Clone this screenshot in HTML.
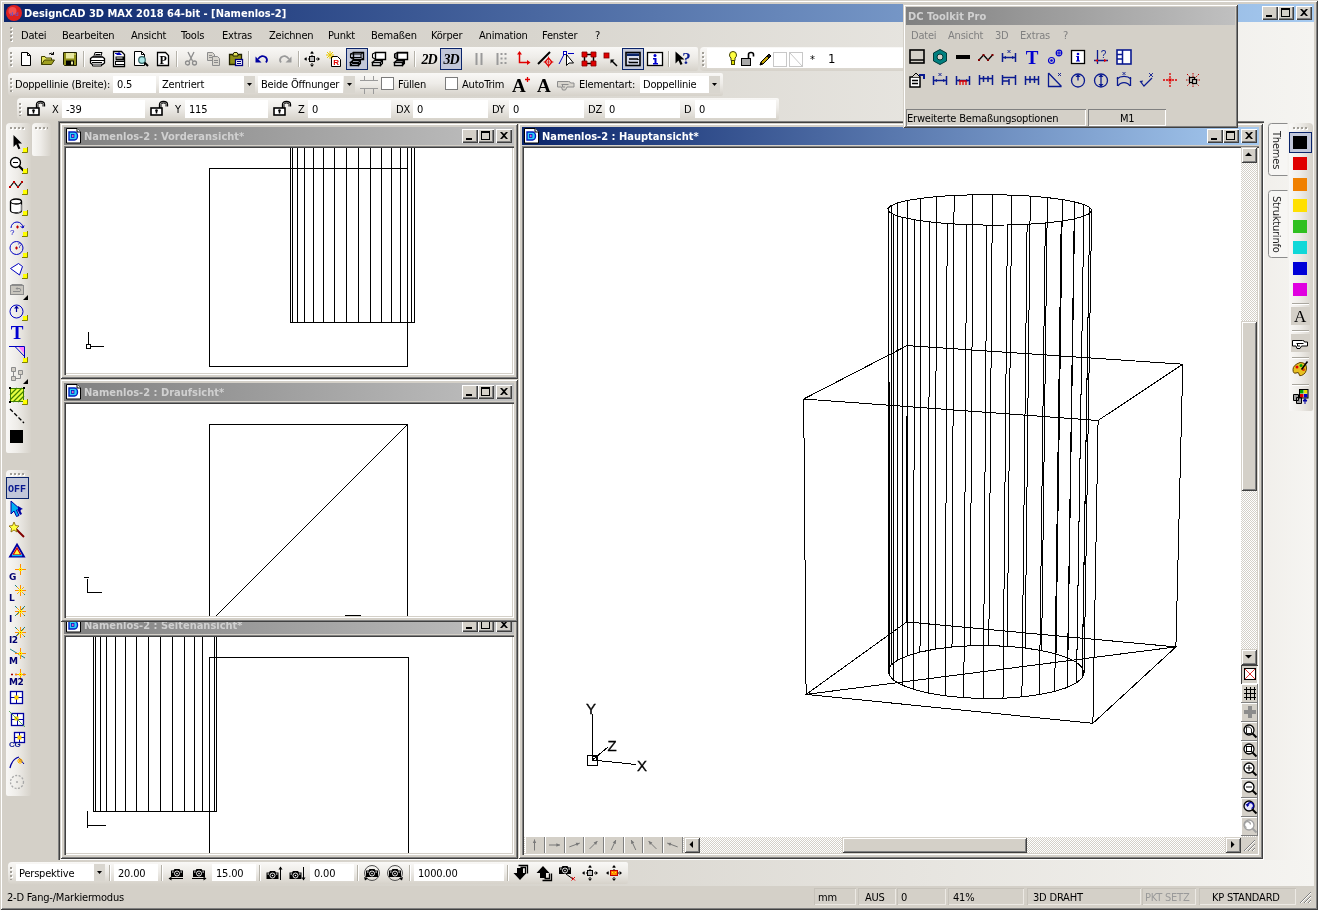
<!DOCTYPE html><html lang="de"><head><meta charset="utf-8"><title>DesignCAD 3D MAX 2018 64-bit - [Namenlos-2]</title><style>html,body{margin:0;padding:0}
body{width:1318px;height:910px;position:relative;overflow:hidden;background:#d4d0c8;font-family:'DejaVu Sans Condensed','Liberation Sans',sans-serif;font-size:11px;letter-spacing:-0.2px;color:#000}
div,svg.i{position:absolute}
svg{display:block;overflow:visible}
.t{white-space:pre;line-height:14px;height:14px}
.aa{left:0;top:0;width:1318px;height:910px}
.t,.cwt span{filter:grayscale(1)}
svg.i,.di{filter:opacity(.999)}
.frame{left:0;top:0;width:1318px;height:910px;box-shadow:inset 1px 1px 0 #d4d0c8,inset -1px -1px 0 #404040,inset 2px 2px 0 #fff,inset -2px -2px 0 #808080}
.tb{background:linear-gradient(180deg,#f9f8f6 0%,#eeece8 45%,#d6d2ca 100%);border-radius:4px 2px 2px 4px}
.tbv{background:linear-gradient(90deg,#f9f8f6 0%,#eeece8 45%,#d6d2ca 100%);border-radius:4px 4px 2px 2px}
.grip{width:3px;background-image:linear-gradient(#a19e97 50%,transparent 50%),linear-gradient(#fff 50%,transparent 50%);background-size:2px 4px,2px 4px;background-position:0 0,1px 1px;background-repeat:repeat-y}
.gripv{height:3px;background-image:linear-gradient(90deg,#a19e97 50%,transparent 50%),linear-gradient(90deg,#fff 50%,transparent 50%);background-size:4px 2px,4px 2px;background-position:0 0,1px 1px;background-repeat:repeat-x}
.sep{width:1px;background:#b5b2a9;box-shadow:1px 0 0 #fff}
.seph{height:1px;background:#a9a69e;box-shadow:0 1px 0 #fff}
.cw{background:#d4d0c8;box-shadow:inset 1px 1px 0 #d4d0c8,inset -1px -1px 0 #404040,inset 2px 2px 0 #fff,inset -2px -2px 0 #808080}
.cwt{left:4px;top:4px;right:4px;height:18px;font-weight:bold;letter-spacing:0;overflow:hidden}
.cwt span{position:absolute;left:20px;top:3px;line-height:14px;white-space:pre}
.di{position:absolute;left:2px;top:1px}
.cwc{left:4px;top:23px;right:4px;bottom:4px;background:#fff;box-shadow:inset 1px 1px 0 #808080,inset 2px 2px 0 #404040,inset -1px -1px 0 #fff,inset -2px -2px 0 #d4d0c8}
.cb{width:16px;height:14px;background:#d4d0c8;box-shadow:inset 1px 1px 0 #fff,inset -1px -1px 0 #404040,inset -2px -2px 0 #808080}
.sb{background:#d4d0c8;box-shadow:inset 1px 1px 0 #d4d0c8,inset -1px -1px 0 #404040,inset 2px 2px 0 #fff,inset -2px -2px 0 #808080}
.trk{background:repeating-conic-gradient(#fff 0% 25%,#d4d0c8 0% 50%) 0 0/2px 2px}
</style></head><body><div class="aa">
<div class="frame"></div>
<div style="left:4px;top:4px;width:1310px;height:18px;background:linear-gradient(90deg,#0a246a 0%,#a6caf0 100%);"></div>
<svg class="i" style="left:6px;top:5px" width="16" height="16" viewBox="0 0 16 16"><circle cx="8" cy="8" r="8" fill="#e02020"/><circle cx="6.500" cy="6" r="4" fill="#f05050"/><text x="8" y="11" text-anchor="middle" font-size="6" font-weight="bold" fill="#7050c0" font-family="'Liberation Sans',sans-serif">d-d</text></svg>
<div class="t" style="left:24px;top:7px;color:#fff;font-weight:bold;letter-spacing:0;">DesignCAD 3D MAX 2018 64-bit - [Namenlos-2]</div>
<div class="cb" style="left:1262px;top:6px"><svg width="16" height="14"><rect x="4" y="9" width="6" height="2" fill="#000"/></svg></div>
<div class="cb" style="left:1278px;top:6px"><svg width="16" height="14"><path d="M3 2h9v9h-9zM4 4v6h7v-6z" fill="#000" fill-rule="evenodd"/></svg></div>
<div class="cb" style="left:1296px;top:6px"><svg width="16" height="14"><path d="M4 3h2l2 2 2-2h2l-3 3.5 3 3.5h-2l-2-2-2 2h-2l3-3.5z" fill="#000"/></svg></div>
<div style="left:4px;top:22px;width:1310px;height:100px;background:linear-gradient(90deg,#d4d0c8 0%,#d8d5ce 40%,#f5f4f1 100%);"></div>
<div class="grip" style="left:10px;top:27px;height:15px"></div>
<div class="t" style="left:21px;top:29px;">Datei</div>
<div class="t" style="left:62px;top:29px;">Bearbeiten</div>
<div class="t" style="left:131px;top:29px;">Ansicht</div>
<div class="t" style="left:181px;top:29px;">Tools</div>
<div class="t" style="left:222px;top:29px;">Extras</div>
<div class="t" style="left:269px;top:29px;">Zeichnen</div>
<div class="t" style="left:328px;top:29px;">Punkt</div>
<div class="t" style="left:371px;top:29px;">Bemaßen</div>
<div class="t" style="left:431px;top:29px;">Körper</div>
<div class="t" style="left:479px;top:29px;">Animation</div>
<div class="t" style="left:542px;top:29px;">Fenster</div>
<div class="t" style="left:595px;top:29px;">?</div>
<div class="tb" style="left:8px;top:47px;width:690px;height:24px;"></div>
<div class="grip" style="left:10px;top:52px;height:15px"></div>
<svg class="i" style="left:18px;top:51px" width="16" height="16" viewBox="0 0 16 16"><path d="M3.5 1.5h6l3 3v10h-9z" fill="#fff" stroke="#000"/><path d="M9.5 1.5v3h3" fill="none" stroke="#000"/></svg>
<svg class="i" style="left:40px;top:51px" width="16" height="16" viewBox="0 0 16 16"><path d="M1.500 13.500v-8h3.500l1 1.500h5.500v2" fill="#e8e860" stroke="#404000"/><path d="M1.500 13.500l3-4.500h10l-3 4.500z" fill="#a0a020" stroke="#404000"/><path d="M9 3q2.500-2 4.500.500M13.500 3.500v-2.500M13.500 3.500h-2.500" fill="none" stroke="#000"/></svg>
<svg class="i" style="left:62px;top:51px" width="16" height="16" viewBox="0 0 16 16"><path d="M1.500 1.500h13v13h-12l-1-1z" fill="#909018" stroke="#202000"/><rect x="4" y="2" width="8" height="5.500" fill="#e8e8a0"/><rect x="4" y="9.500" width="8" height="4.500" fill="#000"/><rect x="9" y="10.500" width="2" height="3" fill="#e8e8a0"/><rect x="12.500" y="2.500" width="1" height="1.500" fill="#e8e8a0"/></svg>
<div class="sep" style="left:83px;top:51px;height:16px"></div>
<svg class="i" style="left:89px;top:51px" width="16" height="16" viewBox="0 0 16 16"><path d="M4.500 6.500l1.500-5h7l-1.500 5" fill="#fff" stroke="#000"/><path d="M6.500 3.500h5M6 5h5" stroke="#000" fill="none"/><path d="M1.500 7.500l2-1.500h10l2 1.500v4.500l-2 1.500h-10l-2-1.500z" fill="#fff" stroke="#000" stroke-width="1.300"/><path d="M1.500 9.500h14M3 11.500h10" stroke="#000" fill="none"/><path d="M3.500 13.500v1.500h9v-1.500" fill="#fff" stroke="#000"/></svg>
<svg class="i" style="left:111px;top:51px" width="16" height="16" viewBox="0 0 16 16"><path d="M2.500 .500h8l3 3v12h-11z" fill="#fff" stroke="#000" stroke-width="1.300"/><path d="M5 4l3-3 3 3z" fill="#0000c0"/><path d="M4 2.500h3" stroke="#0000c0"/><rect x="4.500" y="5.500" width="9" height="4" fill="#000"/><rect x="4.500" y="10.500" width="9" height="3" fill="#fff" stroke="#000"/><rect x="5.500" y="6.500" width="6" height="1" fill="#fff"/></svg>
<svg class="i" style="left:133px;top:51px" width="16" height="16" viewBox="0 0 16 16"><path d="M1.500 .500h7l3 3v11h-10z" fill="#fff" stroke="#000"/><path d="M8.500 .500v3h3" fill="none" stroke="#000"/><circle cx="9" cy="9" r="3.300" fill="#a8e8e8" stroke="#306060" stroke-width="1.200"/><path d="M11.500 11.500l3.500 3.500" stroke="#000" stroke-width="2"/></svg>
<svg class="i" style="left:155px;top:51px" width="16" height="16" viewBox="0 0 16 16"><path d="M2.500 1.500h8l3 3v10h-11z" fill="#fff" stroke="#000" stroke-width="1.300"/><text x="8" y="13" text-anchor="middle" font-size="12" font-weight="bold" fill="#000" font-family="'Liberation Serif',serif">P</text></svg>
<div class="sep" style="left:176px;top:51px;height:16px"></div>
<svg class="i" style="left:183px;top:51px" width="16" height="16" viewBox="0 0 16 16"><path d="M5 1l4.500 9M11 1l-4.500 9" stroke="#8c8c8c" stroke-width="1.300" fill="none"/><circle cx="4.500" cy="12" r="2" fill="none" stroke="#8c8c8c" stroke-width="1.300"/><circle cx="11.500" cy="12" r="2" fill="none" stroke="#8c8c8c" stroke-width="1.300"/></svg>
<svg class="i" style="left:206px;top:51px" width="16" height="16" viewBox="0 0 16 16"><path d="M1.500 1.500h5l2 2v6h-7z" fill="#d8d5ce" stroke="#8c8c8c"/><path d="M6.500 5.500h5l2 2v7h-7z" fill="#d8d5ce" stroke="#8c8c8c"/><path d="M3 4.500h3M3 6.500h3M8 9.500h4M8 11.500h4" stroke="#8c8c8c"/></svg>
<svg class="i" style="left:228px;top:51px" width="16" height="16" viewBox="0 0 16 16"><path d="M1.500 3.500h12v10h-12z" fill="#909018" stroke="#202000" stroke-width="1.300"/><path d="M5 3.500l1-2h3l1 2v1.500h-5z" fill="#e8e860" stroke="#202000"/><rect x="7.500" y="8.500" width="7" height="6" fill="#fff" stroke="#000080" stroke-width="1.300"/><path d="M9 10.500h4M9 12.500h4" stroke="#000080"/></svg>
<div class="sep" style="left:248px;top:51px;height:16px"></div>
<svg class="i" style="left:254px;top:51px" width="16" height="16" viewBox="0 0 16 16"><path d="M4 8q4-5 8-1.500q2 2.500 0 5" fill="none" stroke="#0000a0" stroke-width="1.800"/><path d="M1.500 5.500v6h6z" fill="#0000a0"/></svg>
<svg class="i" style="left:277px;top:51px" width="16" height="16" viewBox="0 0 16 16"><path d="M12 8q-4-5-8-1.500q-2 2.500 0 5" fill="none" stroke="#9a9a9a" stroke-width="1.800"/><path d="M14.500 5.500v6h-6z" fill="#9a9a9a"/></svg>
<div class="sep" style="left:298px;top:51px;height:16px"></div>
<svg class="i" style="left:304px;top:51px" width="16" height="16" viewBox="0 0 16 16"><path d="M8 0l2 2.500h-4zM8 16l2-2.500h-4zM0 8l2.500-2v4zM16 8l-2.500-2v4z" fill="#000"/><path d="M8 2v12M2 8h12" stroke="#000" stroke-dasharray="1 1"/><rect x="5.500" y="5.500" width="5" height="5" fill="#fff" stroke="#000"/><path d="M6.500 6.500h1v1h-1zM8.500 8.500h1v1h-1zM8.500 6.500h1v1h-1zM6.500 8.500h1v1h-1z" fill="#000"/></svg>
<svg class="i" style="left:326px;top:51px" width="16" height="16" viewBox="0 0 16 16"><path d="M5.500 5.500h6l3 3v7h-9z" fill="#fff" stroke="#000"/><text x="10" y="14" text-anchor="middle" font-size="8" font-weight="bold" fill="#e00000" font-family="'Liberation Sans',sans-serif">R</text><path d="M4 0v8M0 4h8M1 1l6 6M7 1l-6 6" stroke="#e8c800" stroke-width="1"/></svg>
<div style="left:346px;top:48px;width:20px;height:20px;border:1px solid #0a246a;background:#c2c7d9;"></div>
<svg class="i" style="left:349px;top:51px" width="16" height="16" viewBox="0 0 16 16"><path d="M4.500 1.500L1.500 3V6.500L4.500 8.500" fill="none" stroke="#000" stroke-width="1.100"/><path d="M4.500 1.500H14.500V8.500H4.500Z" fill="none" stroke="#000" stroke-width="1.400"/><path d="M1.500 3H12V6.500H1.500M12 3L14.500 1.500M12 6.500L14.500 8.500" fill="none" stroke="#000" stroke-width="1"/><path d="M1.500 11.500L3.500 9.500H11.500V12.500L9.500 14.500V11.500Z" fill="none" stroke="#000" stroke-width="1.100"/><path d="M9.500 11.500L11.500 9.500" stroke="#000" stroke-width="1.100"/><path d="M1.500 11.500H9.500V14.500H1.500Z" fill="none" stroke="#000" stroke-width="1.400"/><path d="M3.500 9.500V12.500H11.500M3.500 12.500L1.500 14.500" fill="none" stroke="#000" stroke-width="1"/></svg>
<svg class="i" style="left:371px;top:51px" width="16" height="16" viewBox="0 0 16 16"><path d="M4.500 1.500L1.500 3V6.500L4.500 8.500" fill="#fff" stroke="#000" stroke-width="1.100"/><path d="M4.500 1.500H14.500V8.500H4.500Z" fill="#fff" stroke="#000" stroke-width="1.400"/><path d="M1.500 11.500L3.500 9.500H11.500V12.500L9.500 14.500V11.500Z" fill="#fff" stroke="#000" stroke-width="1.100"/><path d="M9.500 11.500L11.500 9.500" stroke="#000" stroke-width="1.100"/><path d="M1.500 11.500H9.500V14.500H1.500Z" fill="#fff" stroke="#000" stroke-width="1.400"/></svg>
<svg class="i" style="left:393px;top:51px" width="16" height="16" viewBox="0 0 16 16"><path d="M4.500 1.500L1.500 3V6.500L4.500 8.500" fill="#707070" stroke="#000" stroke-width="1.100"/><path d="M4.500 1.500H14.500V8.500H4.500Z" fill="#fff" stroke="#000" stroke-width="1.400"/><path d="M5.500 2.500H14" stroke="#000" stroke-dasharray="1 1"/><path d="M1.500 11.500L3.500 9.500H11.500V12.500L9.500 14.500V11.500Z" fill="#909090" stroke="#000" stroke-width="1.100"/><path d="M9.500 11.500L11.500 9.500" stroke="#000" stroke-width="1.100"/><path d="M1.500 11.500H9.500V14.500H1.500Z" fill="#fff" stroke="#000" stroke-width="1.400"/><path d="M9.500 11.500L11.500 9.500V12.500L9.500 14.500Z" fill="#000"/></svg>
<div class="sep" style="left:414px;top:51px;height:16px"></div>
<svg class="i" style="left:421px;top:51px" width="16" height="16" viewBox="0 0 16 16"><text x="8" y="13" text-anchor="middle" font-size="14" font-weight="bold" font-style="italic" letter-spacing="-1" fill="#000" font-family="'Liberation Serif',serif">2D</text></svg>
<div style="left:440px;top:48px;width:20px;height:20px;border:1px solid #0a246a;background:#c2c7d9;"></div>
<svg class="i" style="left:443px;top:51px" width="16" height="16" viewBox="0 0 16 16"><text x="8" y="13" text-anchor="middle" font-size="14" font-weight="bold" font-style="italic" letter-spacing="-1" fill="#000" font-family="'Liberation Serif',serif">3D</text></svg>
<svg class="i" style="left:471px;top:51px" width="16" height="16" viewBox="0 0 16 16"><path d="M5.500 2v12M10.500 2v12" stroke="#9a9a9a" stroke-width="2"/></svg>
<svg class="i" style="left:493px;top:51px" width="16" height="16" viewBox="0 0 16 16"><path d="M4.500 2v12" stroke="#9a9a9a" stroke-width="2"/><path d="M8.500 2v12M12.500 2v12" stroke="#9a9a9a" stroke-width="2" stroke-dasharray="2 2.500"/></svg>
<svg class="i" style="left:515px;top:51px" width="16" height="16" viewBox="0 0 16 16"><path d="M4.500 3v8.500h8" fill="none" stroke="#e00000" stroke-width="1.500"/><path d="M4.500 0l2.500 3.500h-5zM15.500 11.500l-3.500 2.500v-5z" fill="#e00000"/></svg>
<svg class="i" style="left:537px;top:51px" width="16" height="16" viewBox="0 0 16 16"><path d="M1 13L13 1" stroke="#000" stroke-width="2"/><path d="M11.500 7l3.500 4-3.500 4-3.500-4z" fill="none" stroke="#e00000" stroke-width="1.200"/><path d="M11.500 5.500v11M6.500 11h10" stroke="#e00000" stroke-width=".7"/></svg>
<svg class="i" style="left:558px;top:51px" width="16" height="16" viewBox="0 0 16 16"><path d="M1 13L6.500 2.500" stroke="#0000c0"/><rect x="5.500" y=".500" width="3" height="3" fill="#fff" stroke="#0000c0"/><path d="M10 2.500h6" stroke="#0000c0"/><path d="M8.500 3.500v11l2.500-2.500h4.500z" fill="#fff" stroke="#000"/></svg>
<svg class="i" style="left:581px;top:51px" width="16" height="16" viewBox="0 0 16 16"><path d="M3.500 3.500h9v9h-9z" fill="none" stroke="#000" stroke-width="1.500"/><path d="M1 1h5v5h-5zM10 1h5v5h-5zM1 10h5v5h-5zM10 10h5v5h-5z" fill="#e00000" stroke="#800000" stroke-width=".8"/></svg>
<svg class="i" style="left:602px;top:51px" width="16" height="16" viewBox="0 0 16 16"><rect x="2" y="2" width="5" height="5" fill="#e00000" stroke="#800000" stroke-width=".8"/><path d="M15 15l-5-5" stroke="#000" stroke-width="1.500"/><path d="M8.500 8.500h4l-4 4z" fill="#000"/></svg>
<div style="left:622px;top:48px;width:20px;height:20px;border:1px solid #0a246a;background:#c2c7d9;"></div>
<svg class="i" style="left:625px;top:51px" width="16" height="16" viewBox="0 0 16 16"><rect x="1" y="1.500" width="14" height="13" fill="#d8dcec" stroke="#000" stroke-width="1.600"/><rect x="2" y="2.500" width="12" height="2.500" fill="#0a246a"/><path d="M4 8h9M4 11.500h9M13 8v1M4 11.500v-1" stroke="#000" stroke-width="1.500" fill="none"/></svg>
<svg class="i" style="left:647px;top:51px" width="16" height="16" viewBox="0 0 16 16"><rect x=".500" y="1.500" width="15" height="13" fill="#fff" stroke="#000" stroke-width="1.300"/><circle cx="8" cy="4.500" r="1.500" fill="#0000d0"/><path d="M6 7h3.500v5h1.500v1.500h-5v-1.500h1.500v-3.500h-1.500z" fill="#0000d0"/></svg>
<div class="sep" style="left:668px;top:51px;height:16px"></div>
<svg class="i" style="left:675px;top:51px" width="16" height="16" viewBox="0 0 16 16"><path d="M0.500 .500v12l3-3 2 4.500 2-1-2-4.500h4z" fill="#000"/><text x="11.500" y="13" text-anchor="middle" font-size="17" font-weight="bold" fill="#0a1a90" font-family="'Liberation Serif',serif">?</text></svg>
<div class="tb" style="left:700px;top:47px;width:210px;height:24px;"></div>
<div class="grip" style="left:702px;top:52px;height:15px"></div>
<div style="left:707px;top:48px;width:200px;height:20px;background:#fff;"></div>
<svg class="i" style="left:725px;top:51px" width="16" height="16" viewBox="0 0 16 16"><path d="M8 .500a3.500 3.500 0 0 1 3.500 3.500q0 2-1.500 3v2.500h-4v-2.500q-1.500-1-1.500-3a3.500 3.500 0 0 1 3.500-3.500z" fill="#ffff40" stroke="#404000"/><rect x="6.500" y="9.500" width="3" height="4" fill="#e0e000" stroke="#404000"/></svg>
<svg class="i" style="left:740px;top:51px" width="16" height="16" viewBox="0 0 16 16"><rect x="1.500" y="7.500" width="9" height="7" fill="#a8a8a8" stroke="#000"/><path d="M8.500 7.500v-4q0-2 2.500-2t2.500 2v2" fill="none" stroke="#000" stroke-width="1.600"/></svg>
<svg class="i" style="left:757px;top:51px" width="16" height="16" viewBox="0 0 16 16"><path d="M3 14l1-3 6-6 2 2-6 6z" fill="#c0a000" stroke="#000"/><path d="M10 5l2-2 2 2-2 2z" fill="#202020" stroke="#000"/><path d="M3 14l1-3 2 2z" fill="#000"/></svg>
<div style="left:773px;top:52px;width:12px;height:13px;border:1px solid #c8c8c8;background:#fff;"></div>
<svg class="i" style="left:789px;top:52px" width="14" height="15"><rect x=".5" y=".5" width="13" height="14" fill="#fff" stroke="#c8c8c8"/><path d="M1 1L13 14" stroke="#c8c8c8"/></svg>
<div class="t" style="left:810px;top:53px;">*</div>
<div class="t" style="left:828px;top:52px;font-size:13px;">1</div>
<div class="tb" style="left:8px;top:73px;width:715px;height:23px;"></div>
<div class="grip" style="left:10px;top:78px;height:14px"></div>
<div class="t" style="left:15px;top:78px;">Doppellinie (Breite):</div>
<div style="left:113px;top:76px;width:43px;height:17px;background:#fff;"></div>
<div class="t" style="left:117px;top:78px;">0.5</div>
<div style="left:159px;top:76px;width:85px;height:17px;background:#fff;"></div>
<div class="t" style="left:162px;top:78px;">Zentriert</div>
<div style="left:244px;top:76px;width:11px;height:17px;background:#d9d6cf;"></div>
<svg class="i" style="left:246px;top:83px" width="7" height="4"><path d="M1 0h5l-2.500 3z" fill="#000"/></svg>
<div style="left:258px;top:76px;width:85px;height:17px;background:#fff;"></div>
<div class="t" style="left:261px;top:78px;">Beide Öffnunger</div>
<div style="left:344px;top:76px;width:11px;height:17px;background:#d9d6cf;"></div>
<svg class="i" style="left:346px;top:83px" width="7" height="4"><path d="M1 0h5l-2.500 3z" fill="#000"/></svg>
<svg class="i" style="left:360px;top:76px" width="18" height="18" viewBox="0 0 18 18"><path d="M0 4.500h18M0 12.500h18M4.500 0v4M4.500 13v5M13.500 0v4M13.500 13v5" stroke="#9a9a9a" fill="none"/></svg>
<div style="left:381px;top:77px;width:11px;height:11px;border:1px solid #7b7b7b;background:#fff;"></div>
<div class="t" style="left:398px;top:78px;">Füllen</div>
<div style="left:445px;top:77px;width:11px;height:11px;border:1px solid #7b7b7b;background:#fff;"></div>
<div class="t" style="left:462px;top:78px;">AutoTrim</div>
<svg class="i" style="left:512px;top:75px" width="20" height="20" viewBox="0 0 20 20"><text x="0" y="17" font-size="19" font-weight="bold" fill="#000" font-family="'Liberation Serif',serif">A</text><path d="M15.500 2v5M13 4.500h5" stroke="#e00000" stroke-width="1.300"/></svg>
<svg class="i" style="left:536px;top:75px" width="18" height="20" viewBox="0 0 18 20"><text x="1" y="17" font-size="19" font-weight="bold" fill="#000" font-family="'Liberation Serif',serif">A</text></svg>
<svg class="i" style="left:556px;top:77px" width="20" height="16" viewBox="0 0 20 16"><path d="M1.500 4.500h11q2 0 2 1.500h3.500v4h-7l-1.500 3h-3l-1-3h-4z" fill="#d8d5ce" stroke="#8c8c8c"/><path d="M5.500 7.500h7M9 10h-2.500v-2.500" fill="none" stroke="#8c8c8c"/></svg>
<div class="t" style="left:579px;top:78px;">Elementart:</div>
<div style="left:640px;top:76px;width:69px;height:17px;background:#fff;"></div>
<div class="t" style="left:643px;top:78px;">Doppellinie</div>
<div style="left:709px;top:76px;width:11px;height:17px;background:#d9d6cf;"></div>
<svg class="i" style="left:711px;top:83px" width="7" height="4"><path d="M1 0h5l-2.500 3z" fill="#000"/></svg>
<div class="tb" style="left:17px;top:98px;width:762px;height:22px;"></div>
<div class="grip" style="left:19px;top:103px;height:13px"></div>
<svg class="i" style="left:27px;top:100px" width="20" height="16" viewBox="0 0 20 16"><rect x="1" y="8" width="11" height="7" fill="#fff" stroke="#000" stroke-width="1.600"/><circle cx="6.500" cy="10.500" r="1.300" fill="#000"/><path d="M6.500 10.500v3" stroke="#000" stroke-width="1.500"/><path d="M9.500 8v-3.500q0-3 4-3t4 3v2" fill="none" stroke="#000" stroke-width="1.300"/><path d="M11 8v-3.500q0-1.500 2.500-1.500t2.500 1.500v2" fill="none" stroke="#000" stroke-width="1"/></svg>
<div class="t" style="left:52px;top:103px;">X</div>
<div style="left:62px;top:100px;width:83px;height:18px;background:#fff;"></div>
<div class="t" style="left:66px;top:103px;">-39</div>
<svg class="i" style="left:150px;top:100px" width="20" height="16" viewBox="0 0 20 16"><rect x="1" y="8" width="11" height="7" fill="#fff" stroke="#000" stroke-width="1.600"/><circle cx="6.500" cy="10.500" r="1.300" fill="#000"/><path d="M6.500 10.500v3" stroke="#000" stroke-width="1.500"/><path d="M9.500 8v-3.500q0-3 4-3t4 3v2" fill="none" stroke="#000" stroke-width="1.300"/><path d="M11 8v-3.500q0-1.500 2.500-1.500t2.500 1.500v2" fill="none" stroke="#000" stroke-width="1"/></svg>
<div class="t" style="left:175px;top:103px;">Y</div>
<div style="left:185px;top:100px;width:83px;height:18px;background:#fff;"></div>
<div class="t" style="left:189px;top:103px;">115</div>
<svg class="i" style="left:273px;top:100px" width="20" height="16" viewBox="0 0 20 16"><rect x="1" y="8" width="11" height="7" fill="#fff" stroke="#000" stroke-width="1.600"/><circle cx="6.500" cy="10.500" r="1.300" fill="#000"/><path d="M6.500 10.500v3" stroke="#000" stroke-width="1.500"/><path d="M9.500 8v-3.500q0-3 4-3t4 3v2" fill="none" stroke="#000" stroke-width="1.300"/><path d="M11 8v-3.500q0-1.500 2.500-1.500t2.500 1.500v2" fill="none" stroke="#000" stroke-width="1"/></svg>
<div class="t" style="left:298px;top:103px;">Z</div>
<div style="left:308px;top:100px;width:83px;height:18px;background:#fff;"></div>
<div class="t" style="left:312px;top:103px;">0</div>
<div class="t" style="left:396px;top:103px;">DX</div>
<div style="left:413px;top:100px;width:75px;height:18px;background:#fff;"></div>
<div class="t" style="left:417px;top:103px;">0</div>
<div class="t" style="left:492px;top:103px;">DY</div>
<div style="left:509px;top:100px;width:75px;height:18px;background:#fff;"></div>
<div class="t" style="left:513px;top:103px;">0</div>
<div class="t" style="left:588px;top:103px;">DZ</div>
<div style="left:605px;top:100px;width:75px;height:18px;background:#fff;"></div>
<div class="t" style="left:609px;top:103px;">0</div>
<div class="t" style="left:684px;top:103px;">D</div>
<div style="left:695px;top:100px;width:81px;height:18px;background:#fff;"></div>
<div class="t" style="left:699px;top:103px;">0</div>
<div style="left:4px;top:122px;width:54px;height:738px;background:#d4d0c8;"></div>
<div class="tbv" style="left:6px;top:123px;width:25px;height:330px;"></div>
<div class="gripv" style="left:10px;top:127px;width:15px"></div>
<div class="tbv" style="left:32px;top:123px;width:19px;height:33px;"></div>
<div class="gripv" style="left:35px;top:127px;width:13px"></div>
<svg class="i" style="left:9px;top:135px" width="16" height="16" viewBox="0 0 16 16"><path d="M4.500 0v12l2.700-2.700 2.200 5 2-.900-2.200-5h3.800z" fill="#000"/></svg>
<svg class="i" style="left:22px;top:147px" width="6" height="6"><path d="M1 1h4v4h-4z" fill="#ffff00"/><path d="M5.5 0v5.5h-5.5" fill="none" stroke="#808000"/></svg>
<svg class="i" style="left:9px;top:156px" width="16" height="16" viewBox="0 0 16 16"><circle cx="6.500" cy="6.500" r="5" fill="#fff" stroke="#000" stroke-width="1.300"/><path d="M4 6.500h5" stroke="#000"/><path d="M10 10l5 5" stroke="#000" stroke-width="2.200"/></svg>
<svg class="i" style="left:22px;top:168px" width="6" height="6"><path d="M1 1h4v4h-4z" fill="#ffff00"/><path d="M5.5 0v5.5h-5.5" fill="none" stroke="#808000"/></svg>
<svg class="i" style="left:9px;top:177px" width="16" height="16" viewBox="0 0 16 16"><path d="M1 10l4-5 4 5 4-5" fill="none" stroke="#000" stroke-width="1.200"/><path d="M0 9h2v2h-2zM4 4h2v2h-2zM8 9h2v2h-2zM12 4h2v2h-2z" fill="#c00000"/></svg>
<svg class="i" style="left:22px;top:189px" width="6" height="6"><path d="M1 1h4v4h-4z" fill="#ffff00"/><path d="M5.5 0v5.5h-5.5" fill="none" stroke="#808000"/></svg>
<svg class="i" style="left:9px;top:198px" width="16" height="16" viewBox="0 0 16 16"><path d="M1.500 3.500v9a5.500 2.500 0 0 0 11 0v-9" fill="#fff" stroke="#000" stroke-width="1.300"/><ellipse cx="7" cy="3.500" rx="5.500" ry="2.500" fill="#fff" stroke="#000" stroke-width="1.300"/><path d="M9 14.500q3.500-.500 3.500-2v-6" stroke="#808080" fill="none"/></svg>
<svg class="i" style="left:22px;top:210px" width="6" height="6"><path d="M1 1h4v4h-4z" fill="#ffff00"/><path d="M5.5 0v5.5h-5.5" fill="none" stroke="#808000"/></svg>
<svg class="i" style="left:9px;top:219px" width="16" height="16" viewBox="0 0 16 16"><path d="M2 9a6 6 0 0 1 12 0" fill="none" stroke="#0000c0" stroke-width="1"/><path d="M14 9l-2.500-1.500M14 9l1-2.500" stroke="#0000c0"/><path d="M7 8h3M8.500 6.500v3" stroke="#c00000" stroke-width="1.200"/><text x="1" y="16" font-size="8" fill="#0000c0" font-family="'Liberation Sans',sans-serif">?</text></svg>
<svg class="i" style="left:22px;top:231px" width="6" height="6"><path d="M1 1h4v4h-4z" fill="#ffff00"/><path d="M5.5 0v5.5h-5.5" fill="none" stroke="#808000"/></svg>
<svg class="i" style="left:9px;top:240px" width="16" height="16" viewBox="0 0 16 16"><circle cx="7.500" cy="8" r="6.500" fill="none" stroke="#0000c0" stroke-width="1"/><path d="M6 8h3M7.500 6.500v3" stroke="#c00000" stroke-width="1.200"/><text x="8.500" y="8" font-size="8" fill="#0000c0" font-family="'Liberation Sans',sans-serif">?</text></svg>
<svg class="i" style="left:22px;top:252px" width="6" height="6"><path d="M1 1h4v4h-4z" fill="#ffff00"/><path d="M5.5 0v5.5h-5.5" fill="none" stroke="#808000"/></svg>
<svg class="i" style="left:9px;top:261px" width="16" height="16" viewBox="0 0 16 16"><path d="M1.500 7.500l8-5 4 3-3 8.500z" fill="#fff" stroke="#0000c0" stroke-width="1"/></svg>
<svg class="i" style="left:22px;top:273px" width="6" height="6"><path d="M1 1h4v4h-4z" fill="#ffff00"/><path d="M5.5 0v5.5h-5.5" fill="none" stroke="#808000"/></svg>
<svg class="i" style="left:9px;top:282px" width="16" height="16" viewBox="0 0 16 16"><rect x="1.500" y="3.500" width="13" height="9" fill="#c8c5be" stroke="#8c8c8c"/><path d="M4 9.500h7q1.500-1 0-3h-3" fill="none" stroke="#8c8c8c"/><path d="M8.500 5v3l-2-1.500z" fill="#8c8c8c"/><path d="M2.500 2.500h11" stroke="#8c8c8c"/></svg>
<svg class="i" style="left:23px;top:295px" width="5" height="5"><path d="M5 0v5h-5z" fill="#000"/></svg>
<svg class="i" style="left:9px;top:303px" width="16" height="16" viewBox="0 0 16 16"><circle cx="7.500" cy="8.500" r="6.500" fill="none" stroke="#0000c0" stroke-width="1"/><path d="M7.500 9v-5" stroke="#0000a0" stroke-width="1.200"/><path d="M7.500 2.500l2.500 3h-5z" fill="#0000a0"/></svg>
<svg class="i" style="left:22px;top:315px" width="6" height="6"><path d="M1 1h4v4h-4z" fill="#ffff00"/><path d="M5.5 0v5.5h-5.5" fill="none" stroke="#808000"/></svg>
<svg class="i" style="left:9px;top:324px" width="16" height="16" viewBox="0 0 16 16"><text x="8" y="15" text-anchor="middle" font-size="19" font-weight="bold" fill="#0000d0" font-family="'Liberation Serif',serif">T</text></svg>
<svg class="i" style="left:9px;top:345px" width="16" height="16" viewBox="0 0 16 16"><path d="M9 1.500h6v7z" fill="#ff80ff"/><path d="M0 1.500h15.500M15.500 1.500v13" fill="none" stroke="#0000c0" stroke-width="1"/><path d="M6 1.500l9.500 10" stroke="#0000c0" stroke-width="1"/></svg>
<svg class="i" style="left:22px;top:357px" width="6" height="6"><path d="M1 1h4v4h-4z" fill="#ffff00"/><path d="M5.5 0v5.5h-5.5" fill="none" stroke="#808000"/></svg>
<svg class="i" style="left:9px;top:366px" width="16" height="16" viewBox="0 0 16 16"><path d="M2.500 1.500h4v4h-4zM9.500 4.500h4v4h-4zM2.500 10.500h4v4h-4z" fill="#d4d0c8" stroke="#8c8c8c"/><path d="M4.500 6v4.500M7 12.500h4.500v-4" fill="none" stroke="#8c8c8c"/></svg>
<svg class="i" style="left:23px;top:379px" width="5" height="5"><path d="M5 0v5h-5z" fill="#000"/></svg>
<svg class="i" style="left:9px;top:387px" width="16" height="16" viewBox="0 0 16 16"><rect x="1.500" y="1.500" width="13" height="13" fill="#e8ff40" stroke="#408000"/><path d="M1 8L8 1M1 13L13 1M4 15L15 4M9 15l6-6" stroke="#408000" stroke-width="1.200"/><path d="M0 0h2v2h-2zM14 0h2v2h-2zM0 14h2v2h-2zM14 14h2v2h-2z" fill="#000"/></svg>
<svg class="i" style="left:22px;top:399px" width="6" height="6"><path d="M1 1h4v4h-4z" fill="#ffff00"/><path d="M5.5 0v5.5h-5.5" fill="none" stroke="#808000"/></svg>
<svg class="i" style="left:9px;top:408px" width="16" height="16" viewBox="0 0 16 16"><path d="M1 1l14 14" stroke="#000" stroke-width="1.300" stroke-dasharray="4 2"/></svg>
<svg class="i" style="left:9px;top:429px" width="16" height="16" viewBox="0 0 16 16"><rect x="1" y="1" width="13" height="13" fill="#000"/></svg>
<div class="tbv" style="left:6px;top:470px;width:25px;height:326px;"></div>
<div class="gripv" style="left:10px;top:473px;width:15px"></div>
<div style="left:6px;top:477px;width:21px;height:20px;border:1px solid #0a246a;background:#c2c7d9;"></div>
<svg class="i" style="left:9px;top:480px" width="16" height="16" viewBox="0 0 16 16"><text x="8" y="12" text-anchor="middle" font-size="10" font-weight="bold" fill="#0a1a90" letter-spacing="0" font-family="'Liberation Mono',monospace">OFF</text></svg>
<svg class="i" style="left:9px;top:501px" width="16" height="16" viewBox="0 0 16 16"><path d="M2 0v13l3-3 2.500 5.500 2.500-1-2.500-5.500h4.500z" fill="#00b0f0" stroke="#0000a0"/><path d="M9 5l5 3-3 1 2 4-2 1-2-4" fill="#0000a0"/></svg>
<svg class="i" style="left:9px;top:522px" width="16" height="16" viewBox="0 0 16 16"><path d="M6 6l9 9" stroke="#800000" stroke-width="2"/><path d="M5 0l1.500 3.500 3.500.500-2.500 2.500.500 3.500-3-2-3 2 .500-3.500-2.500-2.500 3.500-.500z" fill="#ffff40" stroke="#806000" stroke-width=".8"/></svg>
<svg class="i" style="left:9px;top:543px" width="16" height="16" viewBox="0 0 16 16"><path d="M8 1.500l7 12h-14z" fill="none" stroke="#0000a0" stroke-width="1.800"/><path d="M8 5l4 7h-8z" fill="#ffff40" stroke="#e00000" stroke-width="1.300"/><path d="M3 12.500h10" stroke="#00c0ff" stroke-width="1.500"/></svg>
<svg class="i" style="left:9px;top:564px" width="16" height="16" viewBox="0 0 16 16"><path d="M11.500 0v11M6 5.500h11" stroke="#ff9000" stroke-width="1"/><rect x="10" y="4" width="3" height="3" fill="#ffff00"/><rect x="11" y="5" width="1" height="1" fill="#ff4000"/><text x="0" y="15.500" font-size="9" font-weight="bold" fill="#000070" letter-spacing="-0.5" font-family="'DejaVu Sans','Liberation Sans',sans-serif">G</text></svg>
<svg class="i" style="left:9px;top:585px" width="16" height="16" viewBox="0 0 16 16"><path d="M6 0l10 10" stroke="#208080"/><path d="M8 2l7 7M15 2l-7 7" stroke="#ffb000" stroke-width="1"/><path d="M11.500 0v11M6 5.500h11" stroke="#ff9000" stroke-width="1"/><rect x="10" y="4" width="3" height="3" fill="#ffff00"/><rect x="11" y="5" width="1" height="1" fill="#ff4000"/><text x="0" y="15.500" font-size="9" font-weight="bold" fill="#000070" letter-spacing="-0.5" font-family="'DejaVu Sans','Liberation Sans',sans-serif">L</text></svg>
<svg class="i" style="left:9px;top:606px" width="16" height="16" viewBox="0 0 16 16"><path d="M6 0l10 10M16 0l-10 10" stroke="#208080"/><path d="M8 2l7 7M15 2l-7 7" stroke="#ffb000" stroke-width="1"/><path d="M11.500 0v11M6 5.500h11" stroke="#ff9000" stroke-width="1"/><rect x="10" y="4" width="3" height="3" fill="#ffff00"/><rect x="11" y="5" width="1" height="1" fill="#ff4000"/><text x="0" y="15.500" font-size="9" font-weight="bold" fill="#000070" letter-spacing="-0.5" font-family="'DejaVu Sans','Liberation Sans',sans-serif">I</text></svg>
<svg class="i" style="left:9px;top:627px" width="16" height="16" viewBox="0 0 16 16"><path d="M6 0l10 10M16 0l-10 10" stroke="#208080"/><path d="M8 2l7 7M15 2l-7 7" stroke="#ffb000" stroke-width="1"/><path d="M11.500 0v11M6 5.500h11" stroke="#ff9000" stroke-width="1"/><rect x="10" y="4" width="3" height="3" fill="#ffff00"/><rect x="11" y="5" width="1" height="1" fill="#ff4000"/><text x="0" y="15.500" font-size="9" font-weight="bold" fill="#000070" letter-spacing="-0.5" font-family="'DejaVu Sans','Liberation Sans',sans-serif">I2</text></svg>
<svg class="i" style="left:9px;top:648px" width="16" height="16" viewBox="0 0 16 16"><path d="M1 1l15 9" stroke="#208080" stroke-width="1"/><path d="M11.500 0v11M6 5.500h11" stroke="#ff9000" stroke-width="1"/><rect x="10" y="4" width="3" height="3" fill="#ffff00"/><rect x="11" y="5" width="1" height="1" fill="#ff4000"/><text x="0" y="15.500" font-size="9" font-weight="bold" fill="#000070" letter-spacing="-0.5" font-family="'DejaVu Sans','Liberation Sans',sans-serif">M</text></svg>
<svg class="i" style="left:9px;top:669px" width="16" height="16" viewBox="0 0 16 16"><path d="M2 5.500h14" stroke="#a00000" stroke-width="1.500" stroke-dasharray="2 2"/><path d="M11.500 0v11M6 5.500h11" stroke="#ff9000" stroke-width="1"/><rect x="10" y="4" width="3" height="3" fill="#ffff00"/><rect x="11" y="5" width="1" height="1" fill="#ff4000"/><text x="0" y="15.500" font-size="9" font-weight="bold" fill="#000070" letter-spacing="-0.5" font-family="'DejaVu Sans','Liberation Sans',sans-serif">M2</text></svg>
<svg class="i" style="left:9px;top:690px" width="16" height="16" viewBox="0 0 16 16"><rect x="1.500" y="1.500" width="12" height="12" fill="#fff" stroke="#0000a0" stroke-width="1.300"/><path d="M7.500 1.500v12M1.500 7.500h12" stroke="#0000a0"/><rect x="5.500" y="5.500" width="4" height="4" fill="#ffd000"/></svg>
<svg class="i" style="left:9px;top:711px" width="16" height="16" viewBox="0 0 16 16"><rect x="2.500" y="2.500" width="12" height="12" fill="#fff" stroke="#0000a0" stroke-width="1.300"/><path d="M8.500 2.500v12M2.500 8.500h12" stroke="#0000a0"/><rect x="5.500" y="5.500" width="4" height="4" fill="#ffd000"/><path d="M0 0l16 16" stroke="#40a040" stroke-width=".8"/></svg>
<svg class="i" style="left:9px;top:732px" width="16" height="16" viewBox="0 0 16 16"><rect x="5.500" y=".500" width="10" height="10" fill="#fff" stroke="#0000a0" stroke-width="1.300"/><path d="M10.500 .500v10M5.500 5.500h10" stroke="#0000a0"/><rect x="8.500" y="3.500" width="4" height="4" fill="#ffd000"/><text x="0" y="15" font-size="8" font-weight="bold" fill="#0a1a90" font-family="'Liberation Sans',sans-serif">CG</text></svg>
<svg class="i" style="left:9px;top:753px" width="16" height="16" viewBox="0 0 16 16"><path d="M1 15q2-9 9-11" fill="none" stroke="#0000a0" stroke-width="1.300"/><path d="M10 5l5 6" stroke="#0000a0"/><path d="M8 8h6M11 5v6M9 6l4 4M13 6l-4 4" stroke="#ffb000" stroke-width="1"/></svg>
<svg class="i" style="left:9px;top:774px" width="16" height="16" viewBox="0 0 16 16"><circle cx="8" cy="8" r="6.500" fill="none" stroke="#a8a8a8" stroke-width="1.300" stroke-dasharray="2 1.500"/><circle cx="8" cy="8" r="1" fill="#a8a8a8"/></svg>
<div style="left:1264px;top:122px;width:50px;height:738px;background:linear-gradient(90deg,#f1efeb,#f6f5f2);"></div>
<svg class="i" style="left:1266px;top:121px" width="24" height="140" viewBox="0 0 24 140"><path d="M21.5 2.5H5.5Q2.5 2.5 2.5 5.5V51.5Q2.5 54.5 5.5 54.5H21.5" fill="#f7f6f4" stroke="#8c8c8c"/><path d="M21.5 69.5H5.5Q2.5 69.5 2.5 72.5V133.5Q2.5 136.5 5.5 136.5H21.5" fill="#f7f6f4" stroke="#8c8c8c"/><text x="0" y="0" transform="translate(7,10) rotate(90)" font-family="'DejaVu Sans Condensed','Liberation Sans',sans-serif" font-size="11" fill="#222">Themes</text><text x="0" y="0" transform="translate(7,75) rotate(90)" font-family="'DejaVu Sans Condensed','Liberation Sans',sans-serif" font-size="11" fill="#222">Strukturinfo</text></svg>
<div class="tbv" style="left:1289px;top:123px;width:24px;height:288px;"></div>
<div class="gripv" style="left:1293px;top:127px;width:15px"></div>
<div style="left:1289px;top:132px;width:21px;height:19px;border:1px solid #0a246a;background:#c2c7d9;"></div>
<div style="left:1293px;top:136px;width:14px;height:13px;background:#000000;"></div>
<div style="left:1293px;top:157px;width:14px;height:13px;background:#e00000;"></div>
<div style="left:1293px;top:178px;width:14px;height:13px;background:#f08000;"></div>
<div style="left:1293px;top:199px;width:14px;height:13px;background:#ffe000;"></div>
<div style="left:1293px;top:220px;width:14px;height:13px;background:#30c020;"></div>
<div style="left:1293px;top:241px;width:14px;height:13px;background:#10d8d8;"></div>
<div style="left:1293px;top:262px;width:14px;height:13px;background:#0000d8;"></div>
<div style="left:1293px;top:283px;width:14px;height:13px;background:#e000e0;"></div>
<div class="seph" style="left:1292px;top:303px;width:17px"></div>
<div class="seph" style="left:1292px;top:330px;width:17px"></div>
<div class="seph" style="left:1292px;top:357px;width:17px"></div>
<div class="seph" style="left:1292px;top:384px;width:17px"></div>
<div style="left:1291px;top:307px;width:19px;height:18px;background:#d4d0c8;"></div>
<svg class="i" style="left:1292px;top:308px" width="16" height="16" viewBox="0 0 16 16"><text x="8" y="14" text-anchor="middle" font-size="17" fill="#000" font-family="'Liberation Serif',serif">A</text></svg>
<div style="left:1291px;top:334px;width:19px;height:18px;background:#d4d0c8;"></div>
<svg class="i" style="left:1292px;top:335px" width="16" height="16" viewBox="0 0 16 16"><path d="M.500 5.500h10q2 0 2 1.500h3v4h-6l-1.500 2.500h-3l-1-2.500h-3.500z" fill="#fff" stroke="#000"/><path d="M4.500 8.500h7M8 11h-2.500v-2.500" fill="none" stroke="#000"/></svg>
<svg class="i" style="left:1292px;top:361px" width="16" height="16" viewBox="0 0 16 16"><path d="M8 1.500q6.500 0 6.500 5.500t-5 7.500q-2.500 1-2.500-1.500t-3-1q-3 1-3-3.500t7-7z" fill="#e8c020" stroke="#604000"/><circle cx="5" cy="6" r="1.500" fill="#e00000"/><circle cx="9" cy="4.500" r="1.500" fill="#00a000"/><circle cx="11.500" cy="8.500" r="1.500" fill="#e04000"/><path d="M15.500 .500l-6 8" stroke="#000" stroke-width="1.500"/></svg>
<svg class="i" style="left:1292px;top:389px" width="16" height="16" viewBox="0 0 16 16"><path d="M1.500 5.500h5v6h-5zM4.500 8.500h5v6h-5z" fill="#a0a0a0" stroke="#000"/><path d="M8 1h3.500v3.500h-3.500z" fill="#00a000"/><path d="M12 1h3.500v3.500h-3.500z" fill="#e8e000"/><path d="M8 5h3.500v3.500h-3.500z" fill="#e00000"/><path d="M12 5h3.500v3.500h-3.500z" fill="#0000d0"/><rect x="7.500" y=".500" width="8.500" height="8.500" fill="none" stroke="#000"/><path d="M13 15v-4M11 12l2-2.500 2 2.500z" stroke="#0000a0" fill="#0000a0"/></svg>
<div style="left:4px;top:860px;width:1310px;height:26px;background:linear-gradient(90deg,#d4d0c8 0%,#d8d5ce 40%,#f5f4f1 100%);"></div>
<div class="tb" style="left:8px;top:862px;width:620px;height:22px;"></div>
<div class="grip" style="left:10px;top:867px;height:13px"></div>
<div style="left:16px;top:864px;width:78px;height:17px;background:#fff;"></div>
<div class="t" style="left:19px;top:867px;">Perspektive</div>
<div style="left:94px;top:864px;width:11px;height:17px;background:#d9d6cf;"></div>
<svg class="i" style="left:96px;top:871px" width="7" height="4"><path d="M1 0h5l-2.500 3z" fill="#000"/></svg>
<div class="sep" style="left:109px;top:865px;height:16px"></div>
<div style="left:114px;top:864px;width:44px;height:17px;background:#fff;"></div>
<div class="t" style="left:118px;top:867px;">20.00</div>
<div class="sep" style="left:161px;top:865px;height:16px"></div>
<svg class="i" style="left:167px;top:865px" width="18" height="16" viewBox="0 0 18 16"><g transform="translate(4,3)"><path d="M0 2.500h2.500l1-1.500h5l1 1.500h2.500v6.500h-12z" fill="#000"/><circle cx="6" cy="5.500" r="2.500" fill="#000" stroke="#fff" stroke-width=".9"/><circle cx="6" cy="5.500" r=".8" fill="#fff"/><rect x="1" y="3.500" width="1.500" height="1" fill="#fff"/><rect x="9.500" y="3.500" width="1.500" height="1" fill="#fff"/></g><path d="M2 13.500h14" stroke="#000" fill="none"/><path d="M1.500 13.500l3-2v4z" fill="#000"/></svg>
<svg class="i" style="left:190px;top:865px" width="18" height="16" viewBox="0 0 18 16"><g transform="translate(3,3)"><path d="M0 2.500h2.500l1-1.500h5l1 1.500h2.500v6.500h-12z" fill="#000"/><circle cx="6" cy="5.500" r="2.500" fill="#000" stroke="#fff" stroke-width=".9"/><circle cx="6" cy="5.500" r=".8" fill="#fff"/><rect x="1" y="3.500" width="1.500" height="1" fill="#fff"/><rect x="9.500" y="3.500" width="1.500" height="1" fill="#fff"/></g><path d="M2 13.500h14" stroke="#000" fill="none"/><path d="M16.500 13.500l-3-2v4z" fill="#000"/></svg>
<div style="left:212px;top:864px;width:44px;height:17px;background:#fff;"></div>
<div class="t" style="left:216px;top:867px;">15.00</div>
<div class="sep" style="left:259px;top:865px;height:16px"></div>
<svg class="i" style="left:265px;top:865px" width="20" height="16" viewBox="0 0 20 16"><g transform="translate(1.500,5)"><path d="M0 2.500h2.500l1-1.500h5l1 1.500h2.500v6.500h-12z" fill="#000"/><circle cx="6" cy="5.500" r="2.500" fill="#000" stroke="#fff" stroke-width=".9"/><circle cx="6" cy="5.500" r=".8" fill="#fff"/><rect x="1" y="3.500" width="1.500" height="1" fill="#fff"/><rect x="9.500" y="3.500" width="1.500" height="1" fill="#fff"/></g><path d="M15.500 2v13" stroke="#000" fill="none"/><path d="M15.500 1.500l-2 3h4z" fill="#000"/></svg>
<svg class="i" style="left:288px;top:865px" width="20" height="16" viewBox="0 0 20 16"><g transform="translate(1.500,5)"><path d="M0 2.500h2.500l1-1.500h5l1 1.500h2.500v6.500h-12z" fill="#000"/><circle cx="6" cy="5.500" r="2.500" fill="#000" stroke="#fff" stroke-width=".9"/><circle cx="6" cy="5.500" r=".8" fill="#fff"/><rect x="1" y="3.500" width="1.500" height="1" fill="#fff"/><rect x="9.500" y="3.500" width="1.500" height="1" fill="#fff"/></g><path d="M15.500 2v13" stroke="#000" fill="none"/><path d="M15.500 15.500l-2-3h4z" fill="#000"/></svg>
<div style="left:310px;top:864px;width:44px;height:17px;background:#fff;"></div>
<div class="t" style="left:314px;top:867px;">0.00</div>
<div class="sep" style="left:357px;top:865px;height:16px"></div>
<svg class="i" style="left:363px;top:865px" width="18" height="16" viewBox="0 0 18 16"><circle cx="9" cy="8" r="7.500" fill="none" stroke="#505050"/><g transform="translate(3,3)"><path d="M0 2.500h2.500l1-1.500h5l1 1.500h2.500v6.500h-12z" fill="#000"/><circle cx="6" cy="5.500" r="2.500" fill="#000" stroke="#fff" stroke-width=".9"/><circle cx="6" cy="5.500" r=".8" fill="#fff"/><rect x="1" y="3.500" width="1.500" height="1" fill="#fff"/><rect x="9.500" y="3.500" width="1.500" height="1" fill="#fff"/></g><path d="M1 12l1 3.500 3-2z" fill="#000"/></svg>
<svg class="i" style="left:386px;top:865px" width="18" height="16" viewBox="0 0 18 16"><circle cx="9" cy="8" r="7.500" fill="none" stroke="#505050"/><g transform="translate(3,3)"><path d="M0 2.500h2.500l1-1.500h5l1 1.500h2.500v6.500h-12z" fill="#000"/><circle cx="6" cy="5.500" r="2.500" fill="#000" stroke="#fff" stroke-width=".9"/><circle cx="6" cy="5.500" r=".8" fill="#fff"/><rect x="1" y="3.500" width="1.500" height="1" fill="#fff"/><rect x="9.500" y="3.500" width="1.500" height="1" fill="#fff"/></g><path d="M17 12l-1 3.500-3-2z" fill="#000"/></svg>
<div class="sep" style="left:409px;top:865px;height:16px"></div>
<div style="left:414px;top:864px;width:90px;height:17px;background:#fff;"></div>
<div class="t" style="left:418px;top:867px;">1000.00</div>
<div class="sep" style="left:507px;top:865px;height:16px"></div>
<svg class="i" style="left:513px;top:865px" width="16" height="16" viewBox="0 0 16 16"><path d="M5.500 .500h9v8M7.500 2.500h5v6" fill="none" stroke="#000" stroke-width="1.300"/><path d="M4 3h6v5h3.500l-6.500 7-6.500-7h3.500z" fill="#000"/></svg>
<svg class="i" style="left:536px;top:865px" width="16" height="16" viewBox="0 0 16 16"><path d="M6.500 15.500h9v-7M8.500 13.500h5v-5" fill="none" stroke="#000" stroke-width="1.300"/><path d="M4 13h6v-5h3.500l-6.500-7-6.500 7h3.500z" fill="#000"/></svg>
<svg class="i" style="left:558px;top:865px" width="18" height="16" viewBox="0 0 18 16"><g transform="translate(1,0)"><path d="M0 2.500h2.500l1-1.500h5l1 1.500h2.500v6.500h-12z" fill="#000"/><circle cx="6" cy="5.500" r="2.500" fill="#000" stroke="#fff" stroke-width=".9"/><circle cx="6" cy="5.500" r=".8" fill="#fff"/><rect x="1" y="3.500" width="1.500" height="1" fill="#fff"/><rect x="9.500" y="3.500" width="1.500" height="1" fill="#fff"/></g><path d="M8 9l7 5" stroke="#000"/><path d="M13.500 12l3.500 3.500M17 12l-3.500 3.500" stroke="#e00000"/></svg>
<svg class="i" style="left:582px;top:865px" width="16" height="16" viewBox="0 0 16 16"><path d="M8 0l2 2.500h-4zM8 16l2-2.500h-4zM0 8l2.500-2v4zM16 8l-2.500-2v4z" fill="#000"/><path d="M8 2v12M2 8h12" stroke="#000" stroke-dasharray="1 1"/><rect x="5.500" y="5.500" width="5" height="5" fill="#fff" stroke="#000"/><path d="M6.500 6.500h1v1h-1zM8.500 8.500h1v1h-1zM8.500 6.500h1v1h-1zM6.500 8.500h1v1h-1z" fill="#000"/></svg>
<svg class="i" style="left:606px;top:865px" width="16" height="16" viewBox="0 0 16 16"><path d="M8 0l2 2.500h-4zM8 16l2-2.500h-4zM0 8l2.500-2v4zM16 8l-2.500-2v4z" fill="#000"/><path d="M8 2v12M2 8h12" stroke="#000" stroke-dasharray="1 1"/><rect x="4.500" y="5.500" width="7" height="5" fill="#ff8000" stroke="#c00000"/><path d="M6 7h1v1h-1zM9 7h1v1h-1zM7.500 8.500h1v1h-1z" fill="#ffff00"/></svg>
<div style="left:4px;top:886px;width:1310px;height:20px;background:#d4d0c8;"></div>
<div class="t" style="left:7px;top:891px;">2-D Fang-/Markiermodus</div>
<div class="t" style="left:818px;top:891px;color:#000;">mm</div>
<div class="t" style="left:865px;top:891px;color:#000;">AUS</div>
<div class="t" style="left:901px;top:891px;color:#000;">0</div>
<div class="t" style="left:953px;top:891px;color:#000;">41%</div>
<div class="t" style="left:1033px;top:891px;color:#000;">3D DRAHT</div>
<div class="t" style="left:1145px;top:891px;color:#9a9a9a;">PKT SETZ</div>
<div class="t" style="left:1212px;top:891px;color:#000;">KP STANDARD</div>
<div style="left:814px;top:888px;width:42px;height:17px;box-shadow:inset 1px 1px 0 #c6c2ba, inset -1px -1px 0 #ece9e4;"></div>
<div style="left:858px;top:888px;width:38px;height:17px;box-shadow:inset 1px 1px 0 #c6c2ba, inset -1px -1px 0 #ece9e4;"></div>
<div style="left:897px;top:888px;width:49px;height:17px;box-shadow:inset 1px 1px 0 #c6c2ba, inset -1px -1px 0 #ece9e4;"></div>
<div style="left:948px;top:888px;width:76px;height:17px;box-shadow:inset 1px 1px 0 #c6c2ba, inset -1px -1px 0 #ece9e4;"></div>
<div style="left:1027px;top:888px;width:114px;height:17px;box-shadow:inset 1px 1px 0 #c6c2ba, inset -1px -1px 0 #ece9e4;"></div>
<div style="left:1142px;top:888px;width:54px;height:17px;box-shadow:inset 1px 1px 0 #c6c2ba, inset -1px -1px 0 #ece9e4;"></div>
<div style="left:1199px;top:888px;width:97px;height:17px;box-shadow:inset 1px 1px 0 #c6c2ba, inset -1px -1px 0 #ece9e4;"></div>
<svg class="i" style="left:1299px;top:891px" width="13" height="13"><path d="M12 1L1 12M12 5L5 12M12 9L9 12" stroke="#808080"/><path d="M12 2L2 12M12 6L6 12M12 10L10 12" stroke="#fff"/></svg>
<div style="left:58px;top:121px;width:1206px;height:739px;background:#808080;box-shadow:inset 1px 1px 0 #808080, inset 2px 2px 0 #404040, inset -1px -1px 0 #fff, inset -2px -2px 0 #d4d0c8;"></div>
<div class="cw" style="left:60px;top:612px;width:458px;height:247px;"><div class="cwt" style="background:linear-gradient(90deg,#808080,#c0c0c0);color:#d4d0c8"><svg class="di" width="16" height="16" viewBox="0 0 16 16"><path d="M0.500 0.500h10.500l3.500 3.500v11h-14z" fill="#fff" stroke="#000"/><path d="M11 .500v3.500h3.500" fill="#fff" stroke="#000"/><path d="M3 4h5.500a3 4 0 0 1 0 8h-5.500z" fill="#30d0f8" stroke="#0020c0" stroke-width="1.400"/><rect x="5.500" y="6.500" width="2.500" height="3" fill="#e060c0" stroke="#0020c0" stroke-width=".8"/></svg><span>Namenlos-2 : Seitenansicht*</span><div class="cb" style="right:36px;top:2px"><svg width="16" height="14"><rect x="4" y="9" width="6" height="2" fill="#000"/></svg></div><div class="cb" style="right:20px;top:2px"><svg width="16" height="14"><path d="M3 2h9v9h-9zM4 4v6h7v-6z" fill="#000" fill-rule="evenodd"/></svg></div><div class="cb" style="right:2px;top:2px"><svg width="16" height="14"><path d="M4 3h2l2 2 2-2h2l-3 3.5 3 3.5h-2l-2-2-2 2h-2l3-3.5z" fill="#000"/></svg></div></div><div class="cwc"></div></div>
<svg class="i dr" style="left:66px;top:637px" width="446" height="216" viewBox="66 637 446 216" shape-rendering="crispEdges" fill="none" stroke="#000" stroke-width="1"><path d="M93.5 637V811"/><path d="M95.5 637V811"/><path d="M100.5 637V811"/><path d="M106.5 637V811"/><path d="M115.5 637V811"/><path d="M125.5 637V811"/><path d="M136.5 637V811"/><path d="M148.5 637V811"/><path d="M160.5 637V811"/><path d="M172.5 637V811"/><path d="M184.5 637V811"/><path d="M194.5 637V811"/><path d="M202.5 637V811"/><path d="M214.5 637V811"/><path d="M216.5 637V811"/><path d="M93 811.5H217"/><path d="M209.5 853V657.5H408.5V853"/><path d="M87.5 811V828M87 825.5H106"/></svg>
<div class="cw" style="left:60px;top:379px;width:458px;height:243px;"><div class="cwt" style="background:linear-gradient(90deg,#808080,#c0c0c0);color:#d4d0c8"><svg class="di" width="16" height="16" viewBox="0 0 16 16"><path d="M0.500 0.500h10.500l3.500 3.500v11h-14z" fill="#fff" stroke="#000"/><path d="M11 .500v3.500h3.500" fill="#fff" stroke="#000"/><path d="M3 4h5.500a3 4 0 0 1 0 8h-5.500z" fill="#30d0f8" stroke="#0020c0" stroke-width="1.400"/><rect x="5.500" y="6.500" width="2.500" height="3" fill="#e060c0" stroke="#0020c0" stroke-width=".8"/></svg><span>Namenlos-2 : Draufsicht*</span><div class="cb" style="right:36px;top:2px"><svg width="16" height="14"><rect x="4" y="9" width="6" height="2" fill="#000"/></svg></div><div class="cb" style="right:20px;top:2px"><svg width="16" height="14"><path d="M3 2h9v9h-9zM4 4v6h7v-6z" fill="#000" fill-rule="evenodd"/></svg></div><div class="cb" style="right:2px;top:2px"><svg width="16" height="14"><path d="M4 3h2l2 2 2-2h2l-3 3.5 3 3.5h-2l-2-2-2 2h-2l3-3.5z" fill="#000"/></svg></div></div><div class="cwc"></div></div>
<svg class="i dr" style="left:66px;top:404px" width="446" height="212" viewBox="66 404 446 212" shape-rendering="crispEdges" fill="none" stroke="#000" stroke-width="1"><path d="M209.5 616V424.5H407.5V616"/><path d="M407.5 424.5L215.5 616.5"/><path d="M345 615.5H361"/><path d="M87.5 579V593M87 592.5H102M84 577.5H89"/></svg>
<div class="cw" style="left:60px;top:123px;width:458px;height:256px;"><div class="cwt" style="background:linear-gradient(90deg,#808080,#c0c0c0);color:#d4d0c8"><svg class="di" width="16" height="16" viewBox="0 0 16 16"><path d="M0.500 0.500h10.500l3.500 3.500v11h-14z" fill="#fff" stroke="#000"/><path d="M11 .500v3.500h3.500" fill="#fff" stroke="#000"/><path d="M3 4h5.500a3 4 0 0 1 0 8h-5.500z" fill="#30d0f8" stroke="#0020c0" stroke-width="1.400"/><rect x="5.500" y="6.500" width="2.500" height="3" fill="#e060c0" stroke="#0020c0" stroke-width=".8"/></svg><span>Namenlos-2 : Vorderansicht*</span><div class="cb" style="right:36px;top:2px"><svg width="16" height="14"><rect x="4" y="9" width="6" height="2" fill="#000"/></svg></div><div class="cb" style="right:20px;top:2px"><svg width="16" height="14"><path d="M3 2h9v9h-9zM4 4v6h7v-6z" fill="#000" fill-rule="evenodd"/></svg></div><div class="cb" style="right:2px;top:2px"><svg width="16" height="14"><path d="M4 3h2l2 2 2-2h2l-3 3.5 3 3.5h-2l-2-2-2 2h-2l3-3.5z" fill="#000"/></svg></div></div><div class="cwc"></div></div>
<svg class="i dr" style="left:66px;top:148px" width="446" height="225" viewBox="66 148 446 225" shape-rendering="crispEdges" fill="none" stroke="#000" stroke-width="1"><path d="M290.5 148V322"/><path d="M292.5 148V322"/><path d="M297.5 148V322"/><path d="M304.5 148V322"/><path d="M313.5 148V322"/><path d="M323.5 148V322"/><path d="M334.5 148V322"/><path d="M346.5 148V322"/><path d="M358.5 148V322"/><path d="M370.5 148V322"/><path d="M381.5 148V322"/><path d="M391.5 148V322"/><path d="M400.5 148V322"/><path d="M407.5 148V322"/><path d="M411.5 148V322"/><path d="M414.5 148V322"/><path d="M290 322.5H415"/><path d="M209.5 168.5H407.5V366.5H209.5Z"/><path d="M88.5 332V346M88 346.5H104"/><rect x="86.5" y="344.5" width="4" height="4" fill="#fff"/></svg>
<div class="cw" style="left:518px;top:123px;width:745px;height:736px;"><div class="cwt" style="background:linear-gradient(90deg,#0a246a,#a6caf0);color:#fff"><svg class="di" width="16" height="16" viewBox="0 0 16 16"><path d="M0.500 0.500h10.500l3.500 3.500v11h-14z" fill="#fff" stroke="#000"/><path d="M11 .500v3.500h3.500" fill="#fff" stroke="#000"/><path d="M3 4h5.500a3 4 0 0 1 0 8h-5.500z" fill="#30d0f8" stroke="#0020c0" stroke-width="1.400"/><rect x="5.500" y="6.500" width="2.500" height="3" fill="#e060c0" stroke="#0020c0" stroke-width=".8"/></svg><span>Namenlos-2 : Hauptansicht*</span><div class="cb" style="right:36px;top:2px"><svg width="16" height="14"><rect x="4" y="9" width="6" height="2" fill="#000"/></svg></div><div class="cb" style="right:20px;top:2px"><svg width="16" height="14"><path d="M3 2h9v9h-9zM4 4v6h7v-6z" fill="#000" fill-rule="evenodd"/></svg></div><div class="cb" style="right:2px;top:2px"><svg width="16" height="14"><path d="M4 3h2l2 2 2-2h2l-3 3.5 3 3.5h-2l-2-2-2 2h-2l3-3.5z" fill="#000"/></svg></div></div><div class="cwc"></div></div>
<svg class="i dr" style="left:524px;top:148px" width="717" height="688" viewBox="524 148 717 688" shape-rendering="crispEdges" fill="none" stroke="#000" stroke-width="1"><path d="M1083.8 216.2L1074.2 218.9L1061.2 221.1L1045.3 223.0L1027.1 224.3L1007.4 225.0L986.9 225.1L966.6 224.6L947.2 223.6L929.5 221.9L914.4 219.8L902.3 217.3L893.7 214.5L888.9 211.6L888.0 208.6L891.0 205.7L897.7 202.9L907.8 200.4L921.0 198.3L936.6 196.6L954.1 195.4L973.0 194.8L992.4 194.7L1011.7 195.1L1030.3 196.1L1047.4 197.6L1062.4 199.6L1074.8 201.9L1084.0 204.6L1089.8 207.4L1091.7 210.4L1089.7 213.4Z"/><path d="M1076.5 682.9L1067.2 687.5L1054.7 691.4L1039.4 694.6L1021.9 696.9L1003.0 698.3L983.3 698.5L963.8 697.7L945.2 695.8L928.2 693.0L913.7 689.4L902.1 685.1L893.8 680.3L889.2 675.2L888.3 670.0L891.2 664.9L897.6 660.1L907.4 655.8L920.0 652.1L935.1 649.1L952.0 647.0L970.1 645.8L988.8 645.6L1007.3 646.3L1025.2 648.0L1041.6 650.6L1056.0 653.9L1067.9 658.0L1076.8 662.6L1082.3 667.6L1084.1 672.8L1082.2 677.9Z"/><path d="M1083.8 216.2L1076.5 682.9"/><path d="M1074.2 218.9L1067.2 687.5"/><path d="M1061.2 221.1L1054.7 691.4"/><path d="M1045.3 223.0L1039.4 694.6"/><path d="M1027.1 224.3L1021.9 696.9"/><path d="M1007.4 225.0L1003.0 698.3"/><path d="M986.9 225.1L983.3 698.5"/><path d="M966.6 224.6L963.8 697.7"/><path d="M947.2 223.6L945.2 695.8"/><path d="M929.5 221.9L928.2 693.0"/><path d="M914.4 219.8L913.7 689.4"/><path d="M902.3 217.3L902.1 685.1"/><path d="M893.7 214.5L893.8 680.3"/><path d="M888.9 211.6L889.2 675.2"/><path d="M888.0 208.6L888.3 670.0"/><path d="M891.0 205.7L891.2 664.9"/><path d="M897.7 202.9L897.6 660.1"/><path d="M907.8 200.4L907.4 655.8"/><path d="M921.0 198.3L920.0 652.1"/><path d="M936.6 196.6L935.1 649.1"/><path d="M954.1 195.4L952.0 647.0"/><path d="M973.0 194.8L970.1 645.8"/><path d="M992.4 194.7L988.8 645.6"/><path d="M1011.7 195.1L1007.3 646.3"/><path d="M1030.3 196.1L1025.2 648.0"/><path d="M1047.4 197.6L1041.6 650.6"/><path d="M1062.4 199.6L1056.0 653.9"/><path d="M1074.8 201.9L1067.9 658.0"/><path d="M1084.0 204.6L1076.8 662.6"/><path d="M1089.8 207.4L1082.3 667.6"/><path d="M1091.7 210.4L1084.1 672.8"/><path d="M1089.7 213.4L1082.2 677.9"/><path d="M806.1 694.4L1092.9 723.3L1175.9 646.9L906.8 621.9Z"/><path d="M803.7 399.0L1098.1 420.5L1182.8 364.2L907.1 345.6Z"/><path d="M806.1 694.4L803.7 399.0"/><path d="M1092.9 723.3L1098.1 420.5"/><path d="M1175.9 646.9L1182.8 364.2"/><path d="M906.8 621.9L907.1 345.6"/><path d="M806.1 694.4L1175.9 646.9"/><path d="M592.5 760V714"/><path d="M592.5 760L636 764.5"/><path d="M592.5 760L608 747"/><rect x="587.5" y="755.5" width="10" height="10"/><rect x="592.5" y="756.5" width="4" height="4"/></svg>
<svg class="i" style="left:580px;top:700px" width="80" height="80" viewBox="580 700 80 80"><g font-family="'Liberation Sans',sans-serif" font-size="15" fill="#000" stroke="#000" stroke-width=".35"><text x="586" y="713.500">Y</text><text x="637" y="770.500">X</text><text x="607.500" y="750.500">Z</text></g></svg>
<div class="trk" style="left:1241px;top:147px;width:16px;height:690px;"></div>
<div class="sb" style="left:1241px;top:147px;width:16px;height:16px;"></div>
<svg class="i" style="left:1241px;top:147px" width="16" height="16"><path d="M4 9h7L7.5 5.5z" fill="#000"/></svg>
<div class="sb" style="left:1241px;top:321px;width:16px;height:170px;"></div>
<div class="sb" style="left:1241px;top:649px;width:16px;height:16px;"></div>
<svg class="i" style="left:1241px;top:649px" width="16" height="16"><path d="M4 6h7L7.5 9.5z" fill="#000"/></svg>
<div style="left:1241px;top:665px;width:17px;height:19px;background:#d4d0c8;box-shadow:inset 1px 1px 0 #404040, inset -1px -1px 0 #fff;"></div>
<svg class="i" style="left:1242px;top:666px" width="16" height="16" viewBox="0 0 16 16"><rect x="2.500" y="2.500" width="11" height="11" fill="#fff" stroke="#000"/><path d="M3 3l10 10M13 3l-10 10" stroke="#e00000" stroke-width=".8"/></svg>
<div style="left:1241px;top:684px;width:17px;height:19px;background:#d4d0c8;box-shadow:inset 0 -1px 0 #808080, inset -1px 0 0 #808080, inset 1px 1px 0 #fff;"></div>
<svg class="i" style="left:1242px;top:685px" width="16" height="16" viewBox="0 0 16 16"><path d="M2 4.500h12M2 8.500h12M2 12.500h12M4.500 2v13M8.500 2v13M12.500 2v13" stroke="#000" stroke-width="1"/></svg>
<div style="left:1241px;top:703px;width:17px;height:19px;background:#d4d0c8;box-shadow:inset 0 -1px 0 #808080, inset -1px 0 0 #808080, inset 1px 1px 0 #fff;"></div>
<svg class="i" style="left:1242px;top:704px" width="16" height="16" viewBox="0 0 16 16"><path d="M6 2h4v4h4v4h-4v4h-4v-4h-4v-4h4z" fill="#8c8c8c"/></svg>
<div style="left:1241px;top:722px;width:17px;height:19px;background:#d4d0c8;box-shadow:inset 0 -1px 0 #808080, inset -1px 0 0 #808080, inset 1px 1px 0 #fff;"></div>
<svg class="i" style="left:1242px;top:723px" width="16" height="16" viewBox="0 0 16 16"><circle cx="7" cy="7" r="5" fill="#fff" stroke="#000" stroke-width="1.300"/><path d="M10.500 10.500l4 4" stroke="#000" stroke-width="2"/><path d="M4.500 4h3l2 2v4.500h-5z" fill="#fff" stroke="#000" stroke-width=".9"/></svg>
<div style="left:1241px;top:741px;width:17px;height:19px;background:#d4d0c8;box-shadow:inset 0 -1px 0 #808080, inset -1px 0 0 #808080, inset 1px 1px 0 #fff;"></div>
<svg class="i" style="left:1242px;top:742px" width="16" height="16" viewBox="0 0 16 16"><circle cx="7" cy="7" r="5" fill="#fff" stroke="#000" stroke-width="1.300"/><path d="M10.500 10.500l4 4" stroke="#000" stroke-width="2"/><rect x="4.500" y="4.500" width="5" height="5" fill="none" stroke="#000"/></svg>
<div style="left:1241px;top:760px;width:17px;height:19px;background:#d4d0c8;box-shadow:inset 0 -1px 0 #808080, inset -1px 0 0 #808080, inset 1px 1px 0 #fff;"></div>
<svg class="i" style="left:1242px;top:761px" width="16" height="16" viewBox="0 0 16 16"><circle cx="7" cy="7" r="5" fill="#fff" stroke="#000" stroke-width="1.300"/><path d="M10.500 10.500l4 4" stroke="#000" stroke-width="2"/><path d="M4 7h6M7 4v6" stroke="#000"/></svg>
<div style="left:1241px;top:779px;width:17px;height:19px;background:#d4d0c8;box-shadow:inset 0 -1px 0 #808080, inset -1px 0 0 #808080, inset 1px 1px 0 #fff;"></div>
<svg class="i" style="left:1242px;top:780px" width="16" height="16" viewBox="0 0 16 16"><circle cx="7" cy="7" r="5" fill="#fff" stroke="#000" stroke-width="1.300"/><path d="M10.500 10.500l4 4" stroke="#000" stroke-width="2"/><path d="M4 7h6" stroke="#000"/></svg>
<div style="left:1241px;top:798px;width:17px;height:19px;background:#d4d0c8;box-shadow:inset 0 -1px 0 #808080, inset -1px 0 0 #808080, inset 1px 1px 0 #fff;"></div>
<svg class="i" style="left:1242px;top:799px" width="16" height="16" viewBox="0 0 16 16"><circle cx="7" cy="7" r="5" fill="#e4e4fa" stroke="#000" stroke-width="1.300"/><path d="M10.500 10.500l4 4" stroke="#000" stroke-width="2"/><path d="M9.500 9.500a3 3 0 1 0-4-3" fill="none" stroke="#0000a0" stroke-width="1.200"/><path d="M3.500 5l2 3 2-2.500z" fill="#0000a0"/></svg>
<div style="left:1241px;top:817px;width:17px;height:19px;background:#d4d0c8;box-shadow:inset 0 -1px 0 #808080, inset -1px 0 0 #808080, inset 1px 1px 0 #fff;"></div>
<svg class="i" style="left:1242px;top:818px" width="16" height="16" viewBox="0 0 16 16"><circle cx="7" cy="7" r="5" fill="#fff" stroke="#a0a0a0" stroke-width="1.300"/><path d="M10.500 10.500l4 4" stroke="#a0a0a0" stroke-width="2"/><path d="M4.500 9.500a3 3 0 1 1 4-3" fill="none" stroke="#a0a0a0" stroke-width="1.200"/></svg>
<div class="trk" style="left:524px;top:837px;width:733px;height:16px;"></div>
<div style="left:525px;top:837px;width:20px;height:16px;background:#d4d0c8;box-shadow:inset -1px 0 0 #808080, inset 1px 0 0 #fff;"></div>
<svg class="i" style="left:527px;top:837px" width="16" height="16" viewBox="0 0 16 16"><path d="M7.5 13.5L7.5 2.5" stroke="#787878"/><path d="M7.5 2.5L5.8 6.1L9.2 6.1z" fill="#787878"/></svg>
<div style="left:545px;top:837px;width:20px;height:16px;background:#d4d0c8;box-shadow:inset -1px 0 0 #808080, inset 1px 0 0 #fff;"></div>
<svg class="i" style="left:547px;top:837px" width="16" height="16" viewBox="0 0 16 16"><path d="M2.0 8.0L13.0 8.0" stroke="#787878"/><path d="M13.0 8.0L9.4 6.3L9.4 9.7z" fill="#787878"/></svg>
<div style="left:565px;top:837px;width:19px;height:16px;background:#d4d0c8;box-shadow:inset -1px 0 0 #808080, inset 1px 0 0 #fff;"></div>
<svg class="i" style="left:567px;top:837px" width="16" height="16" viewBox="0 0 16 16"><path d="M2.3 9.9L12.7 6.1" stroke="#787878"/><path d="M12.7 6.1L8.7 5.7L9.9 9.0z" fill="#787878"/></svg>
<div style="left:584px;top:837px;width:20px;height:16px;background:#d4d0c8;box-shadow:inset -1px 0 0 #808080, inset 1px 0 0 #fff;"></div>
<svg class="i" style="left:586px;top:837px" width="16" height="16" viewBox="0 0 16 16"><path d="M3.6 11.9L11.4 4.1" stroke="#787878"/><path d="M11.4 4.1L7.6 5.4L10.1 7.9z" fill="#787878"/></svg>
<div style="left:604px;top:837px;width:20px;height:16px;background:#d4d0c8;box-shadow:inset -1px 0 0 #808080, inset 1px 0 0 #fff;"></div>
<svg class="i" style="left:606px;top:837px" width="16" height="16" viewBox="0 0 16 16"><path d="M5.2 13.0L9.8 3.0" stroke="#787878"/><path d="M9.8 3.0L6.7 5.5L9.9 7.0z" fill="#787878"/></svg>
<div style="left:624px;top:837px;width:19px;height:16px;background:#d4d0c8;box-shadow:inset -1px 0 0 #808080, inset 1px 0 0 #fff;"></div>
<svg class="i" style="left:626px;top:837px" width="16" height="16" viewBox="0 0 16 16"><path d="M9.8 13.0L5.2 3.0" stroke="#787878"/><path d="M5.2 3.0L5.1 7.0L8.3 5.5z" fill="#787878"/></svg>
<div style="left:643px;top:837px;width:20px;height:16px;background:#d4d0c8;box-shadow:inset -1px 0 0 #808080, inset 1px 0 0 #fff;"></div>
<svg class="i" style="left:645px;top:837px" width="16" height="16" viewBox="0 0 16 16"><path d="M11.4 11.9L3.6 4.1" stroke="#787878"/><path d="M3.6 4.1L4.9 7.9L7.4 5.4z" fill="#787878"/></svg>
<div style="left:663px;top:837px;width:20px;height:16px;background:#d4d0c8;box-shadow:inset -1px 0 0 #808080, inset 1px 0 0 #fff;"></div>
<svg class="i" style="left:665px;top:837px" width="16" height="16" viewBox="0 0 16 16"><path d="M12.7 9.9L2.3 6.1" stroke="#787878"/><path d="M2.3 6.1L5.1 9.0L6.3 5.7z" fill="#787878"/></svg>
<div class="sb" style="left:684px;top:837px;width:16px;height:16px;"></div>
<svg class="i" style="left:684px;top:837px" width="16" height="16"><path d="M9 4v7L5.5 7.5z" fill="#000"/></svg>
<div class="sb" style="left:842px;top:837px;width:185px;height:16px;"></div>
<div class="sb" style="left:1225px;top:837px;width:16px;height:16px;"></div>
<svg class="i" style="left:1225px;top:837px" width="16" height="16"><path d="M6 4v7L9.5 7.5z" fill="#000"/></svg>
<div style="left:1241px;top:837px;width:16px;height:16px;background:#d4d0c8;"></div>
<svg class="i" style="left:1243px;top:839px" width="13" height="13"><path d="M12 1L1 12M12 5L5 12M12 9L9 12" stroke="#808080"/><path d="M12 2L2 12M12 6L6 12M12 10L10 12" stroke="#fff"/></svg>
<div style="left:903px;top:4px;width:335px;height:124px;background:#d4d0c8;box-shadow:inset 1px 1px 0 #d4d0c8, inset -1px -1px 0 #404040, inset 2px 2px 0 #fff, inset -2px -2px 0 #808080;"></div>
<div style="left:906px;top:7px;width:329px;height:18px;background:linear-gradient(90deg,#808080,#c0c0c0);"></div>
<div class="t" style="left:908px;top:10px;color:#d4d0c8;font-weight:bold;letter-spacing:0;">DC Toolkit Pro</div>
<div class="t" style="left:911px;top:29px;color:#808080;">Datei</div>
<div class="t" style="left:948px;top:29px;color:#808080;">Ansicht</div>
<div class="t" style="left:995px;top:29px;color:#808080;">3D</div>
<div class="t" style="left:1020px;top:29px;color:#808080;">Extras</div>
<div class="t" style="left:1063px;top:29px;color:#808080;">?</div>
<svg class="i" style="left:909px;top:49px" width="16" height="16" viewBox="0 0 16 16"><rect x="1" y="1" width="14" height="13" fill="#d4d0c8" stroke="#000" stroke-width="1.600"/><path d="M1 11h14" stroke="#000" stroke-width="1.500"/></svg>
<svg class="i" style="left:932px;top:49px" width="16" height="16" viewBox="0 0 16 16"><path d="M8 .500l6.500 3.500v8l-6.500 3.500-6.500-3.500v-8z" fill="#008080" stroke="#003838"/><circle cx="8" cy="8" r="3" fill="#d4d0c8" stroke="#003838"/></svg>
<svg class="i" style="left:955px;top:49px" width="16" height="16" viewBox="0 0 16 16"><rect x="1" y="6" width="14" height="4" fill="#000"/></svg>
<svg class="i" style="left:978px;top:49px" width="16" height="16" viewBox="0 0 16 16"><path d="M1 11l4.500-5 4.500 5 4.500-5" fill="none" stroke="#000" stroke-width="1.200"/><path d="M0 10h2v2h-2zM4.500 5h2v2h-2zM9 10h2v2h-2zM13.500 5h2v2h-2z" fill="#800000"/></svg>
<svg class="i" style="left:1001px;top:49px" width="16" height="16" viewBox="0 0 16 16"><path d="M1.500 4v9M14.500 4v9M1.500 8.500h13" stroke="#0a1a90" stroke-width="1.500" fill="none"/><path d="M2 8.500l3-1.500v3zM14 8.500l-3-1.500v3z" fill="#0a1a90"/><path d="M6.500 1l3 3M9.500 1l-3 3" stroke="#0a1a90" stroke-width=".9"/></svg>
<svg class="i" style="left:1024px;top:49px" width="16" height="16" viewBox="0 0 16 16"><text x="8" y="15" text-anchor="middle" font-size="19" font-weight="bold" fill="#0000d0" font-family="'Liberation Serif',serif">T</text></svg>
<svg class="i" style="left:1047px;top:49px" width="16" height="16" viewBox="0 0 16 16"><circle cx="4.500" cy="11.500" r="3" fill="none" stroke="#0000d0" stroke-width="1.200"/><circle cx="4.500" cy="11.500" r="1.300" fill="#0000d0"/><circle cx="12" cy="4" r="2.800" fill="none" stroke="#0000d0" stroke-width="1.200"/><path d="M9 4h6M12 1v6" stroke="#0000d0"/></svg>
<svg class="i" style="left:1070px;top:49px" width="16" height="16" viewBox="0 0 16 16"><rect x="1.500" y="1.500" width="13" height="13" fill="#fff" stroke="#000" stroke-width="1.300"/><circle cx="8" cy="5" r="1.300" fill="#0000d0"/><path d="M6.500 7h2.500v4.500h1v1h-4v-1h1v-3.500h-1z" fill="#0000d0"/></svg>
<svg class="i" style="left:1093px;top:49px" width="16" height="16" viewBox="0 0 16 16"><path d="M4.500 1v14M1 11.500h14" stroke="#0a1a90" stroke-width="1.300"/><path d="M2 11.500l3-1.500v3zM14 11.500l-3-1.500v3z" fill="#e00000"/><text x="10.500" y="9" text-anchor="middle" font-size="10" fill="#0a1a90" font-family="'Liberation Sans',sans-serif">?</text></svg>
<svg class="i" style="left:1116px;top:49px" width="16" height="16" viewBox="0 0 16 16"><rect x="1" y="1" width="14" height="14" fill="#fff" stroke="#0a1a90" stroke-width="1.600"/><path d="M6.500 1v14M1 5.500h5.500M1 10h5.500" stroke="#0a1a90" stroke-width="1.500"/></svg>
<svg class="i" style="left:909px;top:72px" width="16" height="16" viewBox="0 0 16 16"><rect x="1" y="5" width="10" height="10" fill="#fff" stroke="#000" stroke-width="1.500"/><path d="M3 8.500h6M3 11.500h6" stroke="#000" stroke-width="1.300"/><path d="M3 5l4-4 4 4" fill="#d4d0c8" stroke="#000"/><path d="M10 3h5v4" fill="none" stroke="#0a1a90" stroke-width="2"/></svg>
<svg class="i" style="left:932px;top:72px" width="16" height="16" viewBox="0 0 16 16"><path d="M1.500 4v9M14.500 4v9M1.500 8.500h13" stroke="#0a1a90" stroke-width="1.500" fill="none"/><path d="M2 8.500l3-1.500v3zM14 8.500l-3-1.500v3z" fill="#0a1a90"/><path d="M6.500 1l3 3M9.500 1l-3 3" stroke="#0a1a90" stroke-width=".9"/></svg>
<svg class="i" style="left:955px;top:72px" width="16" height="16" viewBox="0 0 16 16"><path d="M1.500 4v9M14.500 4v9M1.500 8.500h13" stroke="#0a1a90" stroke-width="1.500" fill="none"/><path d="M2 8.500l3-1.500v3zM14 8.500l-3-1.500v3z" fill="#0a1a90"/><path d="M5 13v-4h6v4M8 9v4" fill="none" stroke="#e00000" stroke-width="1.300"/></svg>
<svg class="i" style="left:978px;top:72px" width="16" height="16" viewBox="0 0 16 16"><path d="M1.500 3v10M5.500 4v6M10 4v6M14.500 3v10M1.500 6.500h13" stroke="#0a1a90" stroke-width="1.500" fill="none"/></svg>
<svg class="i" style="left:1001px;top:72px" width="16" height="16" viewBox="0 0 16 16"><path d="M1.500 3v10M14.500 3v10M8 7v6M1.500 5.500h13M1.500 9h6.500" stroke="#0a1a90" stroke-width="1.500" fill="none"/></svg>
<svg class="i" style="left:1024px;top:72px" width="16" height="16" viewBox="0 0 16 16"><path d="M1.500 4v9M6 4v7M10.500 4v7M14.500 4v9M1.500 7.500h13" stroke="#0a1a90" stroke-width="1.500" fill="none"/></svg>
<svg class="i" style="left:1047px;top:72px" width="16" height="16" viewBox="0 0 16 16"><path d="M1.500 1v13.500h13M1.500 1l13 13.500" fill="none" stroke="#0a1a90" stroke-width="1.300"/><path d="M11 1l3 3M14 1l-3 3" stroke="#0a1a90" stroke-width=".9"/></svg>
<svg class="i" style="left:1070px;top:72px" width="16" height="16" viewBox="0 0 16 16"><circle cx="8" cy="8.500" r="6.500" fill="none" stroke="#0a1a90" stroke-width="1.300"/><path d="M8 8.500v-5" stroke="#0a1a90" stroke-width="1.300"/><path d="M8 2l2.500 3h-5z" fill="#0a1a90"/></svg>
<svg class="i" style="left:1093px;top:72px" width="16" height="16" viewBox="0 0 16 16"><circle cx="8" cy="8.500" r="6.500" fill="none" stroke="#0a1a90" stroke-width="1.300"/><path d="M8 4v9" stroke="#0a1a90" stroke-width="1.300"/><path d="M8 2l2.500 3h-5zM8 15l2.500-3h-5z" fill="#0a1a90"/></svg>
<svg class="i" style="left:1116px;top:72px" width="16" height="16" viewBox="0 0 16 16"><path d="M2 14a7 7 0 0 1 12 0" fill="none" stroke="#0a1a90" stroke-width="1.300"/><path d="M1 7a9 7 0 0 1 14 0" fill="none" stroke="#0a1a90" stroke-width="1.300"/><path d="M1.500 5v9M14.500 5v9" stroke="#0a1a90" stroke-width="1.300"/><path d="M6.500 0l3 3M9.500 0l-3 3" stroke="#0a1a90" stroke-width=".9"/></svg>
<svg class="i" style="left:1139px;top:72px" width="16" height="16" viewBox="0 0 16 16"><path d="M1 9l4 5 8-8" fill="none" stroke="#0a1a90" stroke-width="1.200"/><path d="M10 1l4 4M14 1l-4 4" stroke="#0a1a90" stroke-width=".9"/><path d="M1 9l3-.500-1 2.500z" fill="#0a1a90"/></svg>
<svg class="i" style="left:1162px;top:72px" width="16" height="16" viewBox="0 0 16 16"><path d="M8 1v14M1 8h14" stroke="#e00000" stroke-width="1.300" stroke-dasharray="2 1"/><rect x="6.500" y="6.500" width="3" height="3" fill="#e00000"/></svg>
<svg class="i" style="left:1185px;top:72px" width="16" height="16" viewBox="0 0 16 16"><path d="M2 2l12 12M14 2l-12 12M8 1v14M1 8h14" stroke="#c00000" stroke-width="1" stroke-dasharray="1.500 1"/><rect x="4.500" y="5.500" width="5" height="5" fill="#d4d0c8" stroke="#000" stroke-width="1.200"/><rect x="7.500" y="7.500" width="4" height="4" fill="#d4d0c8" stroke="#000" stroke-width="1.200"/></svg>
<div style="left:906px;top:109px;width:180px;height:17px;box-shadow:inset 1px 1px 0 #808080, inset -1px -1px 0 #fff;"></div>
<div class="t" style="left:907px;top:112px;">Erweiterte Bemaßungsoptionen</div>
<div style="left:1088px;top:109px;width:78px;height:17px;box-shadow:inset 1px 1px 0 #808080, inset -1px -1px 0 #fff;"></div>
<div class="t" style="left:1120px;top:112px;">M1</div>
</div></body></html>
